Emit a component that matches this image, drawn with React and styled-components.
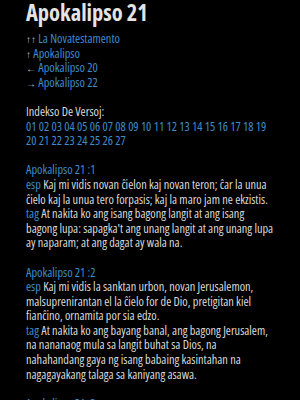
import React from 'react'
import styled, { createGlobalStyle } from 'styled-components'

const GlobalStyle = createGlobalStyle`
  body {
    margin: 0;
    background: #000;
    font-family: "Open Sans", "Liberation Sans", sans-serif;
    font-stretch: condensed;
  }
`

const Page = styled.div`
  padding: 0 23px 0 26px;
  color: #d8d8d8;
  font-size: 12.3px;
  line-height: 14.6px;
`

const Title = styled.h1`
  margin: 0;
  padding-top: 1px;
  font-size: 22.5px;
  line-height: 24px;
  font-weight: bold;
  color: #e4e4e4;
`

const Nav = styled.nav`
  margin-top: 7px;
  display: flex;
  flex-direction: column;
`

const Arrow = styled.span`
  color: #cfcfcf;
  font-size: 10px;
`

const Link = styled.a`
  color: #3d8ccc;
  text-decoration: none;
`

const Section = styled.div`
  margin-top: 14.6px;
`

const Lang = styled.span`
  color: #3d8ccc;
`

const nav = [
  ['↑↑', 'La Novatestamento'],
  ['↑', 'Apokalipso'],
  ['←', 'Apokalipso 20'],
  ['→', 'Apokalipso 22'],
]

const verses = [
  {
    ref: 'Apokalipso 21 :1',
    esp: 'Kaj mi vidis novan ĉielon kaj novan teron; ĉar la unua ĉielo kaj la unua tero forpasis; kaj la maro jam ne ekzistis.',
    tag: "At nakita ko ang isang bagong langit at ang isang bagong lupa: sapagka't ang unang langit at ang unang lupa ay naparam; at ang dagat ay wala na.",
  },
  {
    ref: 'Apokalipso 21 :2',
    esp: 'Kaj mi vidis la sanktan urbon, novan Jerusalemon, malsuprenirantan el la ĉielo for de Dio, pretigitan kiel fianĉino, ornamita por sia edzo.',
    tag: 'At nakita ko ang bayang banal, ang bagong Jerusalem, na nananaog mula sa langit buhat sa Dios, na nahahandang gaya ng isang babaing kasintahan na nagagayakang talaga sa kaniyang asawa.',
  },
  {
    ref: 'Apokalipso 21 :3',
    esp: 'Kaj mi aŭdis grandan voĉon el la trono, dirantan: Jen la tabernaklo de Dio estas kun la homoj.',
    tag: 'At narinig ko ang isang malakas na tinig na mula sa luklukan.',
  },
]

const numbers = Array.from({ length: 27 }, (_, i) => String(i + 1).padStart(2, '0'))

const App = () => (
  <Page>
    <GlobalStyle />
    <Title>Apokalipso 21</Title>
    <Nav>
      {nav.map(([a, t]) => (
        <div key={t}>
          <Arrow>{a}</Arrow> <Link href="#">{t}</Link>
        </div>
      ))}
    </Nav>
    <Section>
      <div>Indekso De Versoj:</div>
      <div>
        {numbers.map((n) => (
          <React.Fragment key={n}>
            <Link href="#">{n}</Link>{' '}
          </React.Fragment>
        ))}
      </div>
    </Section>
    {verses.map((v) => (
      <Section key={v.ref}>
        <Link href="#">{v.ref}</Link>
        <div><Lang>esp</Lang> {v.esp}</div>
        <div><Lang>tag</Lang> {v.tag}</div>
      </Section>
    ))}
  </Page>
)

export default App
